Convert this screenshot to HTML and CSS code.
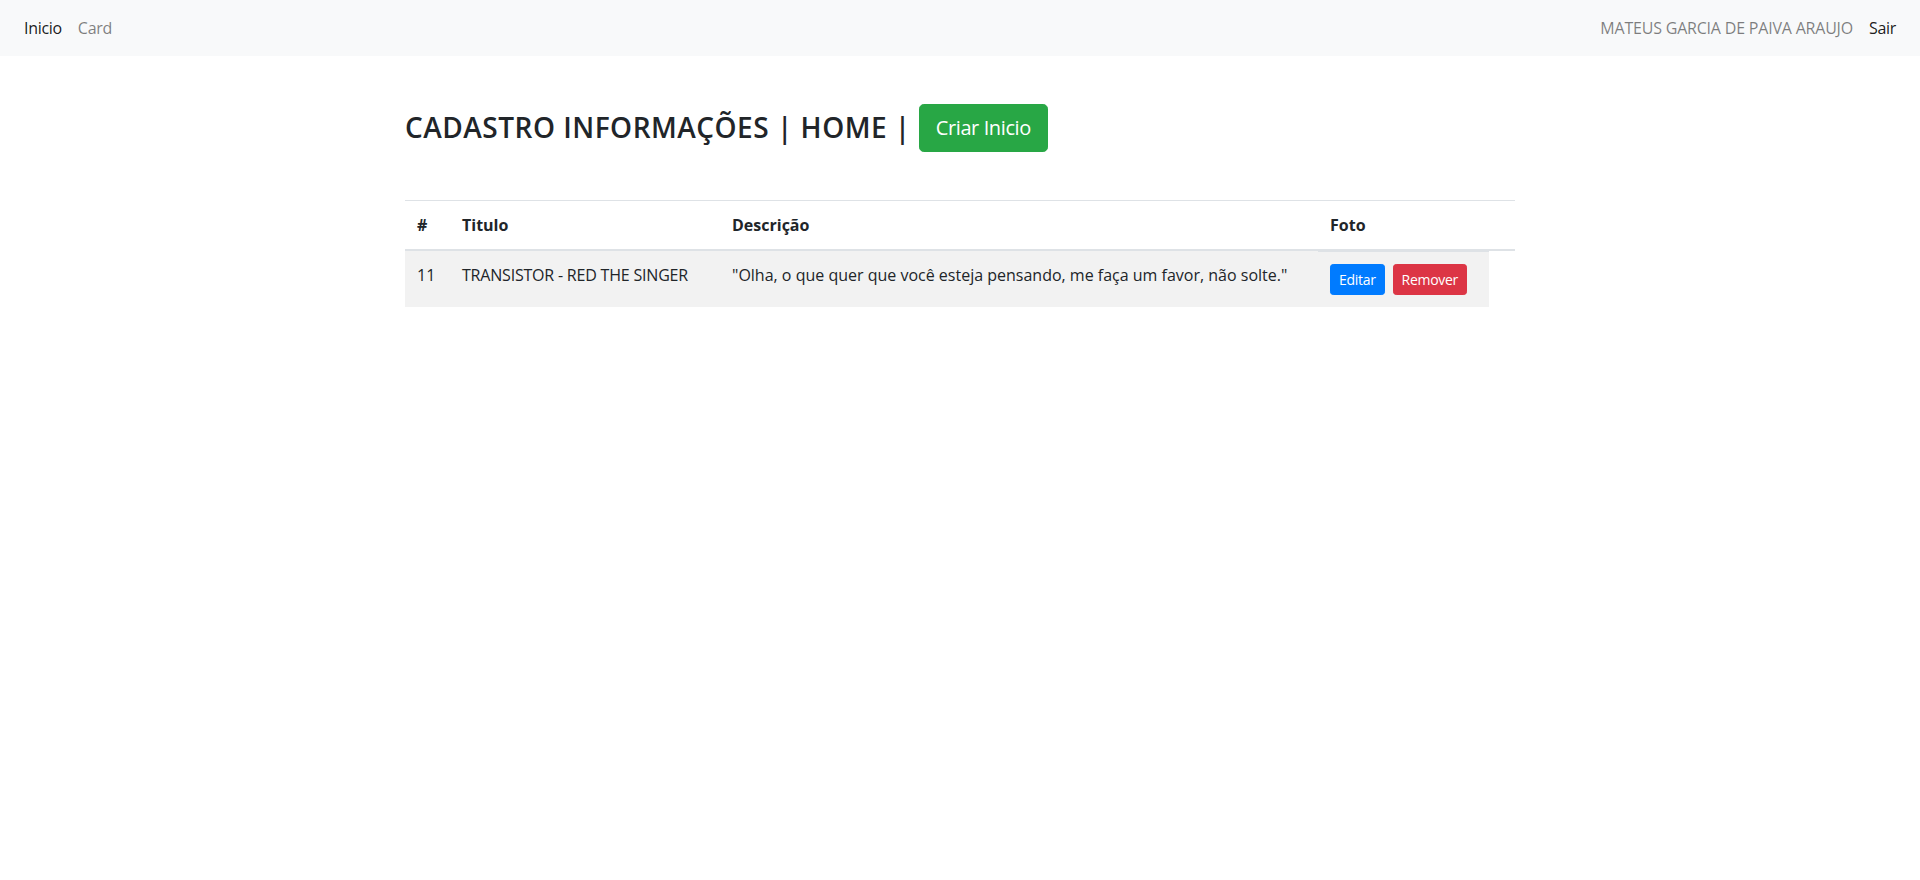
FILE: index.html
```html
<!DOCTYPE html>
<html lang="pt-BR">
<head>
<meta charset="utf-8">
<title>Cadastro Informações</title>
<link rel="stylesheet" href="styles.css">
</head>
<body>
<nav class="navbar">
  <div class="nav-group">
    <a class="nav-link active" href="#">Inicio</a>
    <a class="nav-link" href="#">Card</a>
  </div>
  <div class="nav-group">
    <span class="nav-link user">MATEUS GARCIA DE PAIVA ARAUJO</span>
    <a class="nav-link active" href="#">Sair</a>
  </div>
</nav>
<main class="container">
  <h3 class="title"><span class="title-text">CADASTRO INFORMAÇÕES | HOME |</span> <a class="btn btn-success btn-lg" href="#">Criar Inicio</a></h3>
  <table class="table">
    <thead>
      <tr>
        <th class="col-id">#</th>
        <th class="col-title">Titulo</th>
        <th class="col-desc">Descrição</th>
        <th class="col-photo">Foto</th>
        <th class="col-extra"></th>
      </tr>
    </thead>
    <tbody>
      <tr>
        <td>11</td>
        <td class="caps">TRANSISTOR - RED THE SINGER</td>
        <td>"Olha, o que quer que você esteja pensando, me faça um favor, não solte."</td>
        <td class="actions"><a class="btn btn-sm btn-primary" href="#">Editar</a><a class="btn btn-sm btn-danger" href="#">Remover</a></td>
      </tr>
    </tbody>
  </table>
</main>
</body>
</html>
```
FILE: styles.css
```css
* { box-sizing: border-box; }
html, body {
  margin: 0;
  padding: 0;
  background: #fff;
}
body {
  font-family: "Open Sans", "Noto Sans", "Liberation Sans", sans-serif;
  font-size: 16px;
  line-height: 1.5;
  color: #212529;
}
a { text-decoration: none; }

.navbar {
  display: flex;
  justify-content: space-between;
  align-items: center;
  height: 56px;
  padding: 8px 16px;
  background: #f8f9fa;
}
.nav-group {
  display: flex;
  align-items: center;
}
.nav-link {
  display: block;
  padding: 8px;
  color: rgba(0, 0, 0, 0.5);
  letter-spacing: -0.3px;
}
.nav-link.active {
  color: rgba(0, 0, 0, 0.9);
}
.nav-link.user {
  letter-spacing: -0.2px;
}

.container {
  width: 1140px;
  margin: 0 auto;
  padding: 48px 15px 0;
}
.title {
  display: flex;
  align-items: center;
  gap: 8px;
  height: 48px;
  margin: 0 0 48px;
  font-size: 28px;
  font-weight: 600;
  line-height: 1.2;
  color: #212529;
}
.title-text {
  letter-spacing: 0.5px;
}

.btn {
  display: inline-block;
  border: 1px solid transparent;
  color: #fff;
  font-weight: 400;
  text-align: center;
  white-space: nowrap;
}
.btn-lg {
  padding: 8px 16px;
  font-size: 20px;
  line-height: 1.5;
  border-radius: 4.8px;
  letter-spacing: -0.4px;
}
.btn-sm {
  padding: 4px 8px;
  font-size: 14px;
  line-height: 1.5;
  border-radius: 3.2px;
  letter-spacing: -0.3px;
}
.btn-success { background: #28a745; border-color: #28a745; }
.btn-primary { background: #007bff; border-color: #007bff; }
.btn-danger { background: #dc3545; border-color: #dc3545; }

.table {
  width: 100%;
  border-collapse: collapse;
  table-layout: fixed;
  color: #212529;
}
.table th,
.table td {
  padding: 12px;
  text-align: left;
  vertical-align: top;
  border-top: 1px solid #dee2e6;
}
.table thead th {
  vertical-align: bottom;
  border-bottom: 2px solid #dee2e6;
  font-weight: 700;
}
.table tbody tr {
  background: #f2f2f2;
}
.table td.caps {
  letter-spacing: -0.2px;
}
.col-id { width: 45px; }
.col-title { width: 270px; }
.col-desc { width: 598px; }
.col-photo { width: 171px; }
.col-extra { width: 26px; }
.table td.actions {
  display: flex;
  gap: 8px;
  padding: 12px;
}
```
